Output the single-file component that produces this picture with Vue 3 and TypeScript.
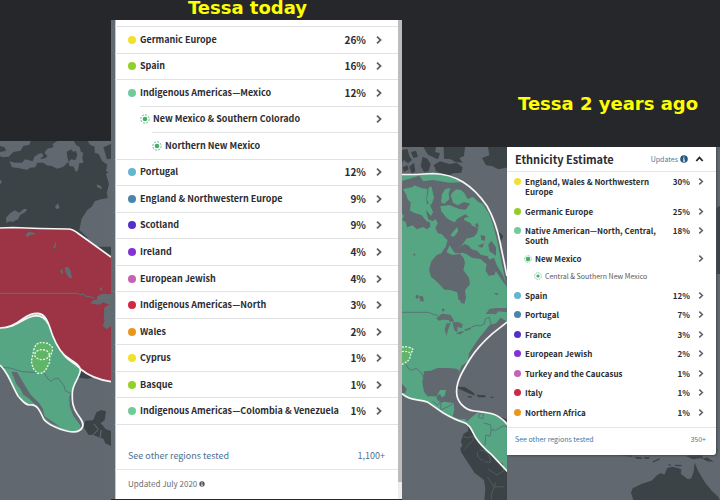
<script setup lang="ts">
interface Region {
  name: string
  percent?: string
  color?: string
  level: 0 | 1 | 2
  opens: boolean
}

interface PastRegion {
  name: string
  percent: string
  color: string
  community?: string
  subCommunity?: string
}

const currentRegions: Region[] = [
  { name: 'Germanic Europe', percent: '26%', color: '#f2e02e', level: 0, opens: true },
  { name: 'Spain', percent: '16%', color: '#93d027', level: 0, opens: true },
  { name: 'Indigenous Americas—Mexico', percent: '12%', color: '#6fcb99', level: 0, opens: true },
  { name: 'New Mexico & Southern Colorado', level: 1, opens: true },
  { name: 'Northern New Mexico', level: 2, opens: false },
  { name: 'Portugal', percent: '12%', color: '#62b6d0', level: 0, opens: true },
  { name: 'England & Northwestern Europe', percent: '9%', color: '#4a86ab', level: 0, opens: true },
  { name: 'Scotland', percent: '9%', color: '#5530c8', level: 0, opens: true },
  { name: 'Ireland', percent: '4%', color: '#8334d0', level: 0, opens: true },
  { name: 'European Jewish', percent: '4%', color: '#c763b3', level: 0, opens: true },
  { name: 'Indigenous Americas—North', percent: '3%', color: '#d02a42', level: 0, opens: true },
  { name: 'Wales', percent: '2%', color: '#e8981f', level: 0, opens: true },
  { name: 'Cyprus', percent: '1%', color: '#f2e02e', level: 0, opens: true },
  { name: 'Basque', percent: '1%', color: '#93d027', level: 0, opens: true },
  { name: 'Indigenous Americas—Colombia & Venezuela', percent: '1%', color: '#6fcb99', level: 0, opens: true },
]

const pastRegions: PastRegion[] = [
  { name: 'England, Wales & Northwestern Europe', percent: '30%', color: '#f0e032' },
  { name: 'Germanic Europe', percent: '25%', color: '#96cb2c' },
  {
    name: 'Native American—North, Central, South',
    percent: '18%',
    color: '#6fcb99',
    community: 'New Mexico',
    subCommunity: 'Central & Southern New Mexico',
  },
  { name: 'Spain', percent: '12%', color: '#62b6d0' },
  { name: 'Portugal', percent: '7%', color: '#4a86ab' },
  { name: 'France', percent: '3%', color: '#5530c8' },
  { name: 'European Jewish', percent: '2%', color: '#8334d0' },
  { name: 'Turkey and the Caucasus', percent: '1%', color: '#c763b3' },
  { name: 'Italy', percent: '1%', color: '#d02a42' },
  { name: 'Northern Africa', percent: '1%', color: '#e8981f' },
]
</script>

<template>
  <main class="page">
    <svg class="backdrop" viewBox="0 0 720 500" preserveAspectRatio="xMidYMin slice" aria-hidden="true">
      <defs>
        <clipPath id="west"><rect x="0" y="141" width="111" height="359" /></clipPath>
        <clipPath id="middle"><rect x="402" y="147" width="105" height="353" /></clipPath>
        <clipPath id="east"><rect x="507" y="147" width="213" height="353" /></clipPath>
      </defs>

      <!-- North America with the red and green regions -->
      <g clip-path="url(#west)">
        <rect class="ocean" x="0" y="141" width="120" height="359" />
        <g transform="translate(0 130) scale(.33333)">
          <path class="land" d="M0 30H345V150L328 178 322 205 303 208 285 213 275 230 262 240 245 266 238 300 262 322V350H345V740H0Z" />
          <path class="ocean" d="M0 33H92L88 44 70 48 62 62 40 66 26 80 8 82 0 78V66L18 62 14 52 0 48Z" />
          <path class="ocean" d="M28 94 45 98 66 98 75 88 98 94 103 80 115 72 126 69 130 77 120 88 137 84 142 78 133 68 142 56 160 52 158 42 172 33H222L228 45 239 51 243 66 250 68 247 82 250 98 238 100 234 120 228 126 221 110 208 108 205 95 190 110 172 116 155 108 140 106 130 98 112 98 106 112 90 113 82 119 68 117 55 114 36 112Z" />
          <path class="land" d="M200 65 214 58 219 65 228 63 232 75 226 90 213 88 206 96 202 82Z" />
          <path class="ocean" d="M263 33H345V120L326 129 318 122 322 104 307 94 296 72 284 68 284 50 270 44Z" />
          <path class="land" d="M310 52 333 42V86L320 88 317 74Z" />
          <path class="ocean" d="M318 132 334 122V230L328 210 320 190 327 162Z" />
          <path class="ocean" d="M18 263 32 248 44 241 58 248 72 236 82 238 76 246 60 256 54 268 38 276 28 274 19 279Z" />
          <path class="ocean" d="M165 230 174 220 179 234 171 238ZM290 163 303 168 306 178 292 172ZM0 150 6 153 0 165Z" />
        </g>
        <path class="red" d="M0 228 13 227.500 40 228.500 68 229 75 231 111 257V381L93 377 80 369 62 380H0Z" />
        <g transform="translate(0 130) scale(.33333)">
          <path class="lake" d="M76 318 84 306 104 308 104 313 90 315 84 320ZM160 354 166 337 169 340 165 356ZM180 420 187 418 190 431 184 430ZM194 413 204 410 211 420 216 444 207 443 196 426ZM299 474 307 472 306 482 301 481Z" />
          <path class="lake" d="M270 520 290 509 292 498 307 491 333 493V510H324L333 523 322 522 310 517 299 524 283 522ZM311 570 313 546 321 541 333 538V570Z" />
          <path class="border-line" d="M0 490H232L242 494 250 492 260 500 270 500 284 506" />
        </g>
        <g transform="translate(0 300) scale(.33333)">
          <path class="lake" d="M273 8 281 0H345V12L324 13 316 5 300 2 285 12ZM312 25 322 16 333 12V78L320 88 309 78 314 58Z" />
          <path class="ocean" d="M0 84H30L230 190 242 207 278 234 333 245V600H0Z" />
          <path class="land" d="M235 233 244 212 278 234 260 236ZM250 380 256 362 279 361 290 336 304 330 318 334 314 360 302 370 318 388 333 393V438L316 430 310 416 292 410 280 404 266 405Z" />
          <path class="border-line" d="M282 372 295 388 280 404M304 390 300 412" />
          <path class="green" d="M0 84 30 81 70 55 95 42 120 40 140 55 160 110 185 155 230 190 242 207 235 235 218 270 216 300 225 330 248 365 250 378 240 392 215 396 180 385 150 370 128 352 115 325 95 315 80 313 55 290 40 260 20 225 0 195Z" />
          <path class="ocean" d="M34 215 51 216 64 238 78 262 92 284 117 309 129 327 133 349 158 365 180 380 153 370 128 349 116 325 104 312 86 295 70 284 62 268 49 252 42 234Z" />
          <path class="ocean" d="M27 231 40 255 51 278 67 303 88 312 79 314 61 301 45 274 30 247ZM217 270 208 290 209 319 220 348 240 374 243 388 250 373 226 333 217 300Z" />
          <path class="border-line" d="M0 202 30 204 65 215 100 217 130 215 144 237 153 244 164 236 175 235 192 257 196 273 215 281" />
          <path class="outline" d="M0 84C28 83 46 74 70 55 84 45 96 40 112 40 132 41 140 55 148 78 160 118 173 146 194 166 208 180 240 190 241 210 240 232 218 250 217 278 216 305 218 322 232 342 243 357 252 368 248 380 242 396 222 398 200 393 176 388 142 372 131 357 119 330 110 312 92 315 74 316 66 300 54 288 40 264 34 246 24 228 16 214 10 204 0 195M0 84C50 85 70 50 108 47Q132 47 145 72M185 155C198 182 230 190 241 207Q278 237 333 245" />
          <path class="community" d="M101 150 108 133 124 127 145 130 157 142 157 155 149 171 149 187 140 205 129 219 112 220 99 204 94 184Z" />
          <ellipse class="community" cx="126" cy="164" rx="22" ry="15" />
        </g>
        <path class="outline-thin" d="M0 228 13 227.500 40 228.500 68 229Q73 229 79 234L111 257" />
      </g>

      <!-- North and Central America with the green region -->
      <g clip-path="url(#middle)">
        <rect class="ocean" x="402" y="147" width="105" height="353" />
        <g transform="translate(396 130) scale(.33333)">
          <path class="land" d="M18 60 34 57 40 78 48 90 36 100 24 90 18 98ZM45 66 60 62 66 80 52 84ZM82 51H120L118 66 132 70 126 88 112 82 96 74ZM80 80 94 86 104 102 98 124 84 126 74 108ZM113 105 132 94 160 102 182 98 200 112 196 128 172 130 150 140 120 122ZM143 51H207L204 78 190 84 200 98 178 96 164 88 144 86ZM258 84 280 76 276 51H334V112L307 118 288 108 270 106ZM303 300 322 318 314 336 306 320Z" />
          <path class="land" d="M40 110 54 98 58 124 48 132ZM20 112 34 106 38 118 24 126Z" />
          <path class="green" d="M18 133 60 133 110 129 160 136 205 160 248 203 278 250 300 300 315 360 334 435V570H18Z" />
          <path class="ocean" d="M18 153 70 137 82 154 110 150 160 158 198 157 237 187 256 208 264 222 248 217 230 200 215 208 205 189 195 180 181 178 171 186 164 195 171 218 185 226 204 216 222 221 209 239 190 237 175 231 160 225 146 227 133 228 136 244 151 263 162 271 176 277 184 266 208 253 218 260 205 264 204 270 224 280 228 287 247 294 243 310 232 321 211 326 202 340 190 352 198 370 176 369 161 346 152 365 157 378 151 391 143 387 136 369 149 351 156 326 163 318 174 320 187 304 183 291 169 308 155 330 148 325 137 312 126 310 118 295 125 280 119 267 110 274 97 268 91 247 94 230 91 210 94 177 74 174 55 166 48 172 18 178Z" />
          <path class="green" d="M98 172 125 166 126 196 113 208 113 224 98 222 93 208ZM138 192 148 177 164 174 158 190 160 207 145 221 135 217ZM59 179 69 170 84 181 86 204 76 214 74 229 60 222 52 211 65 206 59 193ZM60 217 75 226 77 243 68 244ZM87 222 102 222 111 247 105 258 94 245Z" />
          <path class="ocean" d="M18 171 30 193 36 210 44 216 42 242 58 250 76 255 92 274 102 277 103 290 93 298 82 291 62 298 50 286 33 292 30 277 18 270 24 258 18 250ZM105 163 121 160 136 181 132 205 124 217 124 236 140 251 142 270 128 275 114 247 104 230 114 203Z" />
          <path class="ocean" d="M99 419 106 394 122 375 147 366 170 375 192 371 203 384 207 399 202 420 219 443 222 462 207 481 210 504 203 521 188 513 184 487 163 480 145 479 126 458 105 440Z" />
          <path class="ocean" d="M190 350 207 342 219 348 226 357 244 363 254 374 275 379 281 391 294 403 300 421 296 434 278 437 269 422 272 403 253 387 228 383 211 372 192 366ZM254 315 268 319 266 333 256 329ZM245 348 264 340 259 353ZM238 281 246 280 248 292 240 290Z" />
          <path class="ocean" d="M274 232 290 280 303 330 310 365 334 480V430L315 360 303 300ZM286 332 300 352 300 377 280 363 277 344ZM273 392 294 383 302 405 322 438 334 473 319 452 300 424Z" />
          <path class="ocean" d="M50 375 56 370 58 377ZM58 497 66 494 68 504 61 506ZM68 500 79 497 85 513 77 515ZM293 490 307 489 303 496ZM275 555 291 539 320 533H334V550L308 548 300 556 285 562ZM132 570 140 552 150 548 166 565 168 570Z" />
          <path class="border-line" d="M18 547H98L114 552 132 559" />
        </g>
        <g transform="translate(396 300) scale(.33333)">
          <path class="green" d="M18 0H334V66L290 100 248 142 216 190 191 235 190 214 182 206 155 204 125 204 104 212 84 214 79 247 84 275 95 289 122 289 132 270 150 270 146 290 135 304 173 309 175 330 170 349 190 358 206 357 214 365 224 354 243 338 280 339 320 358 334 374V513L286 463 244 420 217 376 188 365 142 339 93 306 52 299 18 281Z" />
          <path class="ocean" d="M192 236 190 214 196 198 216 184 219 160 235 135 250 113 267 92 281 75 300 70 314 53 334 65 290 100 248 142 216 190ZM18 252 32 266 28 280 18 278ZM138 309 124 300 123 288 132 282 137 292 150 286 145 302Z" />
          <path class="lake" d="M121 55 138 41 163 44 175 63 162 67 158 60 140 59 129 62ZM152 70 164 69 157 88 151 107 146 88ZM169 67 187 66 200 73 197 85 185 80 184 97 175 91ZM179 101 195 94 206 95 192 103ZM204 89 226 82 224 88 209 93ZM269 42 280 27 300 24H334V37L308 34 299 43 284 41ZM191 0 208 0 205 12 195 8ZM137 28 143 24 146 32 140 35ZM68 0 82 0 82 6Z" />
          <path class="land" d="M183 260 206 261 233 278 237 287 214 278 201 272 183 264ZM240 284 268 286 269 292 248 292ZM213 289 226 288 228 293 216 292ZM284 290 293 290 292 294 284 293ZM300 346 334 359V366ZM216 378 244 420 286 463 334 516V600H265L268 566 264 540 236 519 214 485 195 456 193 444 199 438 195 424 202 402 217 393Z" />
          <path class="border-line" d="M18 37H98L114 44 126 46M226 82 240 76 252 78 265 72 268 56 280 52 286 75M27 190 38 206 47 211 60 205 74 216 84 236M119 291 134 305 125 316 110 303M135 306 134 330 160 318 172 310M248 342 263 341 261 356 249 353ZM263 369 283 374 286 389 299 391 320 378 334 380M286 389 282 409 269 405 267 436" />
          <path class="country-line" d="M200 408 215 414 229 408 233 420 205 447M244 455Q240 475 262 481M250 450Q282 450 284 487L266 486M299 482 319 491 324 512 303 525 276 507M274 531 295 561 323 560M299 549 286 583V600" />
          <path class="outline" d="M18 281Q34 295 60 299T96 307L142 339Q178 360 200 366C220 371 226 387 238 411 250 430 270 450 286 463L334 514M334 66 290 100Q245 140 222 177C198 216 183 242 182 270 179 304 205 330 236 333 279 338 303 338 334 373" />
          <path class="community" d="M10 148Q20 136 40 142T44 158Q44 174 37 181T17 193ZM18 155Q28 152 42 158" />
        </g>
        <path class="outline-thin" d="M402 174.500H416L433 173.500Q450 174 463 182T487 206Q496 222 500 242L507 276" />
      </g>

      <!-- Australia and the neighbouring islands -->
      <g clip-path="url(#east)">
        <rect class="ocean" x="507" y="147" width="213" height="353" />
        <path class="land" d="M715 209 720 206V274H715Z" />
        <g transform="translate(500 440) scale(.33333)">
          <path class="land" d="M400 180 393 158 398 145 424 132 455 122 471 106 482 100 493 104 502 84 516 80 530 83 544 88 542 101 564 118 574 115 581 95 584 68 594 92 602 106 616 129 636 153 655 171 660 180ZM346 43H394L397 50 374 48ZM402 50 423 52 430 57 410 56ZM432 51 450 52 446 57 434 56ZM456 65 478 55 480 58 462 67ZM505 72 515 75 508 78ZM524 74 546 75 544 79 526 78ZM557 48 578 43H606L609 56 621 52 641 65 622 64 602 54 579 58ZM640 40 654 26 650 40Z" />
        </g>
      </g>
    </svg>

    <section class="today">
      <h1 class="caption caption-today">Tessa today</h1>
      <div class="sheet">
        <div class="sheet-body">
          <ul class="regions">
            <li v-for="region in currentRegions" :key="region.name" :class="'level-' + region.level">
              <component :is="region.opens ? 'button' : 'div'" :type="region.opens ? 'button' : undefined" class="row">
                <svg v-if="region.level > 0" class="target" viewBox="0 0 10 10" aria-hidden="true">
                  <circle class="target-ring" cx="5" cy="5" r="4.200" />
                  <circle class="target-core" cx="5" cy="5" r="2.300" />
                </svg>
                <span v-else class="dot" :style="{ background: region.color }"></span>
                <span class="name">{{ region.name }}</span>
                <span v-if="region.percent" class="percent">{{ region.percent }}</span>
                <svg v-if="region.opens" class="chevron" viewBox="0 0 6 8" aria-hidden="true">
                  <path d="M1 .7 4.600 4 1 7.300" />
                </svg>
              </component>
            </li>
          </ul>
          <a class="tested" href="#regions"><span>See other regions tested</span><span>1,100+</span></a>
          <p class="updated">
            Updated July 2020
            <svg class="info" viewBox="0 0 8 8" aria-hidden="true">
              <circle cx="4" cy="4" r="3.600" />
              <path d="M4 1.500V2.500M3.200 3.600H4V6M3 6.100H5.100" />
            </svg>
          </p>
        </div>
        <div class="scroll-track"><div class="scroll-thumb"></div></div>
      </div>
    </section>

    <section class="past">
      <h1 class="caption caption-past">Tessa 2 years ago</h1>
      <div class="card">
        <header class="card-head">
          <h2>Ethnicity Estimate</h2>
          <a class="updates" href="#updates">
            Updates
            <svg class="info" viewBox="0 0 8 8" aria-hidden="true">
              <circle cx="4" cy="4" r="3.800" />
              <path d="M4 1.500V2.500M3.200 3.600H4V6M3 6.100H5.100" />
            </svg>
          </a>
          <button type="button" class="collapse" aria-label="Collapse">
            <svg viewBox="0 0 8 6" aria-hidden="true"><path d="M.8 5 4 1.500 7.200 5" /></svg>
          </button>
        </header>
        <ul class="past-regions">
          <li v-for="region in pastRegions" :key="region.name">
            <button type="button" class="past-row">
              <span class="dot" :style="{ background: region.color }"></span>
              <span class="name">{{ region.name }}</span>
              <span class="percent">{{ region.percent }}</span>
              <svg class="chevron" viewBox="0 0 6 8" aria-hidden="true"><path d="M1 .7 4.600 4 1 7.300" /></svg>
            </button>
            <button v-if="region.community" type="button" class="past-row community-row">
              <svg class="target" viewBox="0 0 10 10" aria-hidden="true">
                <circle class="target-ring" cx="5" cy="5" r="4.200" />
                <circle class="target-core" cx="5" cy="5" r="2.800" />
              </svg>
              <span class="name">{{ region.community }}</span>
              <svg class="chevron" viewBox="0 0 6 8" aria-hidden="true"><path d="M1 .7 4.600 4 1 7.300" /></svg>
            </button>
            <div v-if="region.subCommunity" class="past-row sub-row">
              <svg class="target" viewBox="0 0 10 10" aria-hidden="true">
                <circle class="target-ring" cx="5" cy="5" r="4.200" />
                <circle class="target-core" cx="5" cy="5" r="2" />
              </svg>
              <span class="name">{{ region.subCommunity }}</span>
            </div>
          </li>
        </ul>
        <a class="card-foot" href="#regions"><span>See other regions tested</span><span>350+</span></a>
      </div>
    </section>
  </main>
</template>

<style>
body {
  margin: 0;
  background: #25272b;
}
</style>

<style scoped>
.page {
  position: relative;
  display: grid;
  grid-template-columns: 111fr 291fr 105fr 213fr;
  min-height: 100vh;
  overflow: hidden;
  background: #25272b;
  color: #2b2d31;
  font-family: "Noto Sans CJK SC", "Noto Sans", sans-serif;
}

.backdrop {
  position: absolute;
  inset: 0;
  width: 100%;
  height: 100%;
}

.ocean { fill: #616870; }
.lake { fill: #636c71; }
.land { fill: #3c4347; }
.red { fill: #9c3446; }
.green { fill: #56a583; }
.border-line { fill: none; stroke: #55757a; stroke-width: 3; }
.country-line { fill: none; stroke: #535a5f; stroke-width: 3; }
.outline { fill: none; stroke: #f6f6f6; stroke-width: 5; stroke-linejoin: round; }
.outline-thin { fill: none; stroke: #f6f6f6; stroke-width: 1.700; stroke-linejoin: round; }
.community { fill: #60b568; stroke: #e6f8e6; stroke-width: 4; stroke-dasharray: 6 4; }

ul, p, h1, h2 { margin: 0; padding: 0; }
li { list-style: none; }
a { text-decoration: none; }

button {
  margin: 0;
  border: 0;
  background: none;
  color: inherit;
  font: inherit;
  text-align: left;
  cursor: pointer;
}

.caption {
  color: #ff0;
  font: bold 18px/20px "DejaVu Sans", sans-serif;
  white-space: nowrap;
}

.today {
  position: relative;
  grid-column: 2;
  display: flex;
  flex-direction: column;
}

.caption-today {
  height: 20px;
  padding-right: 18px;
  line-height: 16px;
  text-align: center;
}

.sheet {
  flex: 1;
  display: flex;
  margin-bottom: 1px;
  border-left: 4px solid #626a71;
  background: #fff;
}

.sheet-body {
  flex: 1;
  padding-top: 6px;
  box-shadow: inset 1px 0 #c4c7ca;
}

.scroll-track {
  display: flex;
  flex-direction: column;
  width: 4px;
  padding-bottom: 17px;
  background: #ededed;
}

.scroll-thumb {
  flex: 1;
  background: #bcbcbc;
}

.regions {
  display: flex;
  flex-direction: column;
  height: 398px;
  border-bottom: 1px solid #e1e2e3;
}

.regions li {
  flex: 1;
  display: flex;
  border-top: 1px solid #e1e2e3;
}

.regions .level-1 { margin-left: 25px; }
.regions .level-2 { margin-left: 37px; }

.row {
  flex: 1;
  display: flex;
  align-items: center;
  padding: 0 16px 0 13px;
  font-size: 9px;
  font-weight: 700;
  line-height: 16px;
  white-space: nowrap;
}

.level-1 .row,
.level-2 .row { padding-left: 0; }

.dot {
  flex: none;
  width: 8px;
  height: 8px;
  margin-right: 4px;
  border-radius: 50%;
}

.target {
  flex: none;
  width: 10px;
  height: 10px;
  margin-right: 3px;
}

.target-ring { fill: none; stroke: #6cc58e; stroke-width: 1; stroke-dasharray: 2.200 1; }
.target-core { fill: #46ad6b; }

.name { flex: 1; }

.row .percent { font-size: 10px; }

.chevron {
  flex: none;
  width: 6px;
  height: 8px;
  margin-left: 10px;
}

.chevron path { fill: none; stroke: #5c5f63; stroke-width: 1.700; }

.tested {
  display: flex;
  justify-content: space-between;
  padding: 23px 13px 5px;
  border-bottom: 1px solid #e4e5e6;
  color: #4d6f91;
  font-size: 9px;
  line-height: 16px;
}

.updated {
  display: flex;
  align-items: center;
  gap: 2px;
  padding: 6px 13px;
  color: #6b6d70;
  font-size: 8px;
  line-height: 16px;
}

.info { width: 6px; height: 6px; }
.info circle { fill: #55585c; }
.info path { fill: none; stroke: #fff; stroke-width: 1; }

.past {
  position: relative;
  grid-column: 4;
}

.caption-past { padding: 94px 0 33px 11px; }

.card {
  margin-right: 4px;
  border-radius: 0 0 3px 0;
  background: #fff;
  box-shadow: 1px 1px 2px #454b51;
}

.card-head {
  display: flex;
  align-items: center;
  height: 24px;
  padding: 0 12px 0 8px;
  border-bottom: 1px solid #e4e5e6;
}

.card-head h2 {
  flex: 1;
  font-size: 11px;
  font-weight: 700;
  line-height: 16px;
}

.updates {
  display: flex;
  align-items: center;
  gap: 2px;
  color: #4f7b9d;
  font-size: 7px;
  line-height: 16px;
}

.updates .info { width: 8px; height: 8px; }
.updates .info circle { fill: #24587f; }

.collapse {
  display: flex;
  margin-left: 7px;
  padding: 0;
}

.collapse svg { width: 9px; height: 6px; }
.collapse path { fill: none; stroke: #1f2124; stroke-width: 1.800; }

.past-regions {
  display: flex;
  flex-direction: column;
  justify-content: space-between;
  height: 241px;
  padding: 5px 12px 9px 7px;
}

.past-row {
  display: flex;
  align-items: flex-start;
  width: 100%;
  padding: 0;
  font-size: 8px;
  font-weight: 700;
  line-height: 10px;
}

.past-row .dot { width: 7px; height: 7px; margin: 1px 4px 0 0; }
.past-row .target { width: 8px; height: 8px; margin: 1px 3px 0 0; }
.past-row .percent { margin-left: 14px; }
.past-row .chevron { height: 7px; margin: 1px 0 0 8px; }

.community-row { margin-top: 8px; padding-left: 10px; }
.sub-row { margin-top: 7px; padding-left: 20px; color: #55585c; font-size: 7px; font-weight: 400; }

.card-foot {
  display: flex;
  justify-content: space-between;
  padding: 3px 10px 8px 8px;
  border-top: 1px solid #e4e5e6;
  color: #4477a0;
  font-size: 7px;
  line-height: 16px;
}
</style>
